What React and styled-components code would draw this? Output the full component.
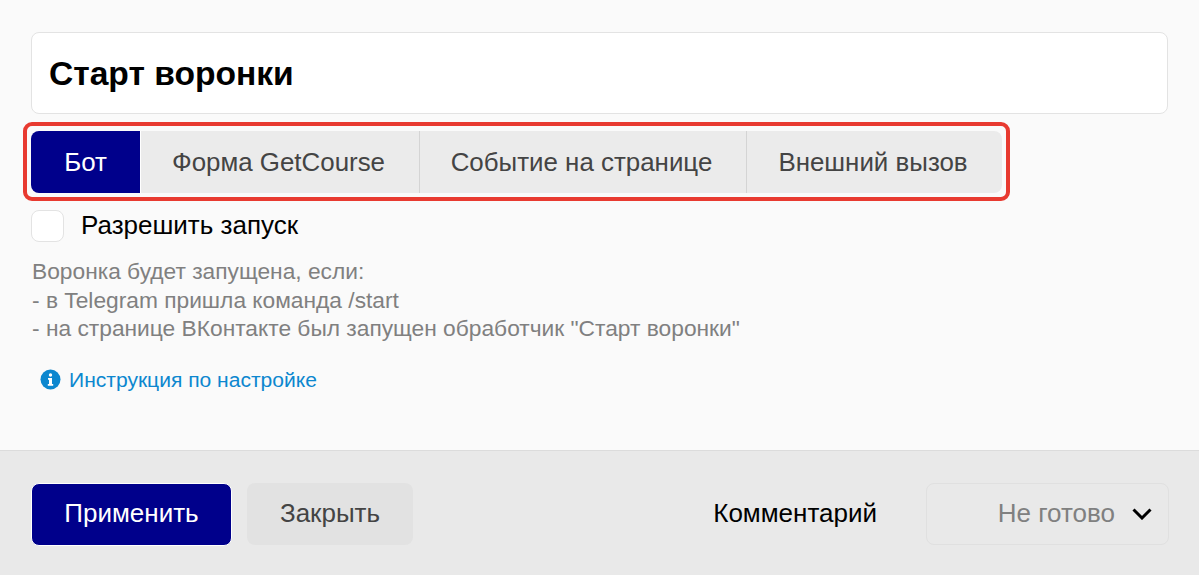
import React from "react";
import styled, { createGlobalStyle } from "styled-components";

const Global = createGlobalStyle`
  html, body { margin: 0; padding: 0; }
  body { font-family: "Liberation Sans", Arial, sans-serif; background: #fafafa; }
  * { box-sizing: border-box; }
`;

const Page = styled.div`
  width: 1199px;
  height: 575px;
  display: flex;
  flex-direction: column;
  background: #fafafa;
  overflow: hidden;
`;

const Body = styled.main`
  flex: 0 0 450px;
  padding: 32px 31px 0;
  display: flex;
  flex-direction: column;
  align-items: flex-start;
`;

const TitleBox = styled.div`
  width: 1137px;
  height: 82px;
  padding: 2px 17px 0;
  display: flex;
  align-items: center;
  background: #fff;
  border: 1px solid #e3e3e3;
  border-radius: 8px;
  font-size: 33.6px;
  font-weight: 700;
  color: #000;
`;

const TabsFrame = styled.div`
  position: relative;
  margin-top: 17px;
  display: flex;
  height: 62px;
  &::after {
    content: "";
    position: absolute;
    inset: -9px -8px -8px;
    border: 4px solid #e83a30;
    border-radius: 9px;
    pointer-events: none;
  }
`;

const Tab = styled.div`
  height: 62px;
  width: ${(p) => p.$w}px;
  padding-right: ${(p) => (p.$active ? 0 : 3)}px;
  display: flex;
  align-items: center;
  justify-content: center;
  font-size: 25.9px;
  background: ${(p) => (p.$active ? "#00008b" : "#ebebeb")};
  color: ${(p) => (p.$active ? "#fff" : "#444")};
  border-left: ${(p) => (p.$divider ? "1px solid #d4d4d4" : "none")};
  border-right: ${(p) => (p.$active ? "1px solid #fff" : "none")};
  &:first-child { border-radius: 8px 0 0 8px; }
  &:last-child { border-radius: 0 8px 8px 0; }
`;

const CheckRow = styled.label`
  margin-top: 15px;
  display: flex;
  align-items: center;
  gap: 17px;
  font-size: 26px;
  line-height: 35px;
  color: #000;
`;

const CheckBox = styled.span`
  width: 33px;
  height: 32px;
  background: #fff;
  border: 1px solid #e3e3e3;
  border-radius: 8px;
`;

const Hint = styled.div`
  margin-top: 14px;
  margin-left: 1px;
  font-size: 22.75px;
  line-height: 28.6px;
  color: #808080;
`;

const HelpLink = styled.a`
  margin-top: 25px;
  margin-left: 9px;
  display: flex;
  align-items: center;
  gap: 8px;
  font-size: 21.05px;
  color: #0c87cf;
`;

const Footer = styled.footer`
  flex: 1;
  display: flex;
  align-items: center;
  padding: 2px 30px 0 31px;
  background: #e9e9e9;
  border-top: 1px solid #dcdcdc;
`;

const Primary = styled.button`
  width: 201px;
  height: 63px;
  padding: 0 0 2px;
  background: #00008b;
  border: 1px solid #fff;
  border-radius: 8px;
  color: #fff;
  font: 26px "Liberation Sans", Arial, sans-serif;
`;

const Secondary = styled.button`
  width: 166px;
  height: 62px;
  margin-left: 15px;
  padding: 0 0 2px;
  background: #e2e2e2;
  border: none;
  border-radius: 8px;
  color: #444;
  font: 26px "Liberation Sans", Arial, sans-serif;
`;

const Comment = styled.span`
  margin-left: auto;
  margin-bottom: 2px;
  font-size: 26px;
  color: #000;
`;

const Select = styled.div`
  width: 243px;
  height: 62px;
  margin-left: 49px;
  padding: 0 16px 2px 0;
  display: flex;
  align-items: center;
  justify-content: flex-end;
  gap: 17px;
  border: 1px solid #e0e0e0;
  border-radius: 8px;
  font-size: 26px;
  color: #808080;
`;

const Chevron = styled.svg`
  margin-top: 2px;
`;

export default function App() {
  return (
    <Page>
      <Global />
      <Body>
        <TitleBox>Старт воронки</TitleBox>
        <TabsFrame>
          <Tab $active $w={110}>Бот</Tab>
          <Tab $w={278}>Форма GetCourse</Tab>
          <Tab $divider $w={327}>Событие на странице</Tab>
          <Tab $divider $w={256}>Внешний вызов</Tab>
        </TabsFrame>
        <CheckRow>
          <CheckBox />
          Разрешить запуск
        </CheckRow>
        <Hint>
          Воронка будет запущена, если:<br />
          - в Telegram пришла команда /start<br />
          - на странице ВКонтакте был запущен обработчик "Старт воронки"
        </Hint>
        <HelpLink>
          <svg width="21" height="21" viewBox="0 0 21 21">
            <circle cx="10.5" cy="10.5" r="10" fill="#0c87cf" />
            <circle cx="10.5" cy="6" r="1.7" fill="#fff" />
            <path d="M8 9h4v6h1.2v1.8H7.8V15H9v-4.2H8z" fill="#fff" />
          </svg>
          Инструкция по настройке
        </HelpLink>
      </Body>
      <Footer>
        <Primary>Применить</Primary>
        <Secondary>Закрыть</Secondary>
        <Comment>Комментарий</Comment>
        <Select>
          Не готово
          <Chevron width="20" height="12" viewBox="0 0 20 12">
            <path d="M1.5 1.5 10 10l8.5-8.5" fill="none" stroke="#000" strokeWidth="3" />
          </Chevron>
        </Select>
      </Footer>
    </Page>
  );
}
